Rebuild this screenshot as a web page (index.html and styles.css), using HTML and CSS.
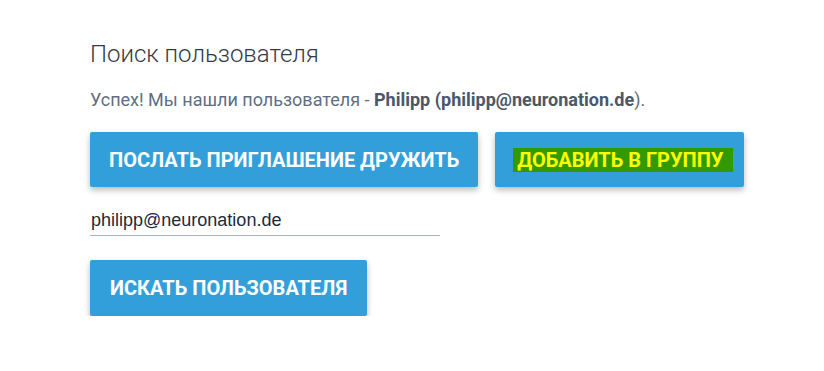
FILE: index.html
```html
<!DOCTYPE html>
<html lang="ru">
<head>
<meta charset="utf-8">
<title>Поиск пользователя</title>
<link rel="stylesheet" href="styles.css">
</head>
<body>
<main class="page">
  <h2 class="title">Поиск пользователя</h2>
  <p class="result">Успех! Мы нашли пользователя - <strong>Philipp (philipp@neuronation.de</strong>).</p>
  <div class="actions">
    <button class="btn">Послать приглашение дружить</button>
    <button class="btn btn-group"><span class="hl">Добавить в группу</span></button>
  </div>
  <div class="field">
    <input class="input" type="text" value="philipp@neuronation.de">
  </div>
  <button class="btn btn-search">Искать пользователя</button>
</main>
</body>
</html>
```
FILE: styles.css
```css
html, body {
  margin: 0;
  background: #ffffff;
}
.page {
  padding: 36px 0 0 90px;
  font-family: Roboto, "Noto Sans", sans-serif;
}
.title {
  margin: 0;
  font-size: 24px;
  font-weight: 300;
  color: #343a44;
  line-height: 36px;
}
.result {
  margin: 16px 0 0;
  font-size: 18px;
  line-height: 24px;
  color: #5f6f80;
}
.result strong {
  color: #4a5868;
  font-weight: 700;
}
.actions {
  display: flex;
  gap: 17px;
  margin-top: 20px;
}
.btn {
  display: block;
  height: 55px;
  padding: 0 19px;
  border: none;
  border-radius: 2px;
  background: #339fda;
  color: #ffffff;
  font-family: Roboto, "Noto Sans", sans-serif;
  font-size: 20px;
  font-weight: 700;
  text-transform: uppercase;
  box-shadow: 0 3px 6px rgba(0, 0, 0, 0.28);
}
.btn-group {
  padding: 0 11px 0 18px;
}
.btn-search {
  height: 56px;
  padding: 0 20px;
}
.hl {
  background: #339900;
  color: #ffff00;
  padding: 0 10px 0 4px;
}
.field {
  margin: 18px 0 24px;
}
.input {
  display: block;
  width: 350px;
  box-sizing: border-box;
  border: none;
  border-bottom: 1px solid #a3b3c3;
  padding: 5px 1px 4px;
  font-family: "Liberation Sans", Arial, sans-serif;
  font-size: 18px;
  color: #1d2a3a;
  outline: none;
  background: transparent;
}
```
